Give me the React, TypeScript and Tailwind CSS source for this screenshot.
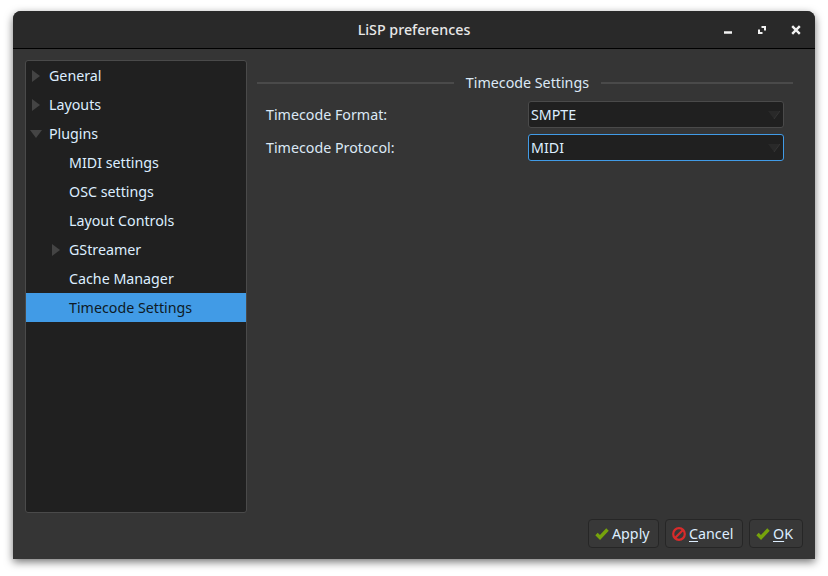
import { ReactNode } from "react";

const FONT = "font-['Noto_Sans',sans-serif]";

const TREE = [
  { label: "General", depth: 0, arrow: "right" },
  { label: "Layouts", depth: 0, arrow: "right" },
  { label: "Plugins", depth: 0, arrow: "down" },
  { label: "MIDI settings", depth: 1 },
  { label: "OSC settings", depth: 1 },
  { label: "Layout Controls", depth: 1 },
  { label: "GStreamer", depth: 1, arrow: "right" },
  { label: "Cache Manager", depth: 1 },
  { label: "Timecode Settings", depth: 1, selected: true },
];

function TreeRow({ label, depth, arrow, selected }: { label: string; depth: number; arrow?: string; selected?: boolean }) {
  return (
    <div
      className={`flex h-[29px] items-center ${depth ? "pl-[43px]" : "pl-[23px]"} ${
        selected ? "bg-[#419be6] text-[#0e1a25]" : "text-[#ddeeff]"
      }`}
    >
      {arrow === "right" && (
        <svg viewBox="0 0 8 12" className="-ml-[17px] mr-[9px] h-3 w-2 shrink-0">
          <path d="M0 0L8 6L0 12Z" fill="#444444" />
        </svg>
      )}
      {arrow === "down" && (
        <svg viewBox="0 0 12 8" className="-ml-[19px] mr-[7px] h-2 w-3 shrink-0">
          <path d="M0 0H12L6 8Z" fill="#444444" />
        </svg>
      )}
      <span>{label}</span>
    </div>
  );
}

function Combo({ value, focused }: { value: string; focused?: boolean }) {
  return (
    <div
      className={`flex h-[27px] w-[256px] items-center justify-between rounded-[3px] border bg-[#202020] pl-[2px] pr-[3px] text-[#ddeeff] ${
        focused ? "border-[#419be6]" : "border-[#4a4a4a]"
      }`}
    >
      <span>{value}</span>
      <svg viewBox="0 0 12 8" className="h-2 w-3">
        <path d="M0 0H12L6 8Z" fill="#292929" />
        <path d="M12 0L6 8" stroke="#363636" strokeWidth="1" />
      </svg>
    </div>
  );
}

function FormRow({ label, children }: { label: string; children: ReactNode }) {
  return (
    <div className="flex items-center justify-between pl-[9px] pr-[19px] text-[#dce9f5]">
      <span>{label}</span>
      {children}
    </div>
  );
}

function DialogButton({ width, icon, children }: { width: string; icon: ReactNode; children: ReactNode }) {
  return (
    <button className={`flex h-[29px] items-center gap-[3px] rounded-[4px] border border-[#262626] bg-[#383838] pl-[6px] text-[#ddeeff] ${width}`}>
      {icon}
      <span>{children}</span>
    </button>
  );
}

const checkIcon = (
  <svg viewBox="0 0 14 14" className="h-[14px] w-[14px] shrink-0">
    <path d="M1.5 7L5 10.5L12.5 2.5" fill="none" stroke="#76a30c" strokeWidth="3.4" />
  </svg>
);

const cancelIcon = (
  <svg viewBox="0 0 14 14" className="h-[14px] w-[14px] shrink-0">
    <circle cx="7" cy="7" r="5.8" fill="none" stroke="#d92b2b" strokeWidth="2.2" />
    <path d="M11 3L3 11" stroke="#d92b2b" strokeWidth="2.2" />
  </svg>
);

export default function App() {
  return (
    <div className={`h-[576px] w-[828px] overflow-hidden bg-white pl-[13px] pt-[11px] text-[14.25px] ${FONT}`}>
      <div className="flex h-[548px] w-[802px] flex-col rounded-t-[8px] bg-[#353535] shadow-[0_3px_9px_rgba(0,0,0,0.55)]">
        {/* Title bar */}
        <div className="grid h-[38px] shrink-0 grid-cols-[1fr_auto_1fr] items-center rounded-t-[8px] border-b border-black bg-[#292929]">
          <div />
          <div className="font-medium text-[#e8e8e8]">LiSP preferences</div>
          <div className="flex items-center justify-end">
            <svg viewBox="0 0 10 10" className="h-[10px] w-[10px]">
              <path d="M1 7.5H9" stroke="#f2f2f2" strokeWidth="2.5" />
            </svg>
            <svg viewBox="0 0 10 10" className="ml-[24px] h-[10px] w-[10px]">
              <path d="M4.5 1H9V5.5H7V3H4.5ZM1 4.5H3V7H5.5V9H1Z" fill="#f2f2f2" />
            </svg>
            <svg viewBox="0 0 10 10" className="ml-[24px] mr-[14px] h-[10px] w-[10px]">
              <path d="M1.2 1.2L8.8 8.8M8.8 1.2L1.2 8.8" stroke="#f2f2f2" strokeWidth="2.4" />
            </svg>
          </div>
        </div>

        <div className="flex min-h-0 flex-1 flex-col px-[12px] pb-[11px] pt-[11px]">
          <div className="flex min-h-0 flex-1 gap-[10px]">
            {/* Sidebar */}
            <div className="h-[453px] w-[222px] shrink-0 rounded-[3px] border border-[#4a4a4a] bg-[#202020]">
              {TREE.map((row) => (
                <TreeRow key={row.label} {...row} />
              ))}
            </div>

            {/* Settings panel */}
            <div className="flex-1 pt-[12px]">
              <div className="flex h-[22px] items-center pr-[10px] text-[#dce9f5]">
                <div className="h-[2px] flex-1 bg-[#4a4a4a]" />
                <span className="px-[12px] pb-[1px]">Timecode Settings</span>
                <div className="h-[2px] w-[192px] bg-[#4a4a4a]" />
              </div>
              <div className="mt-[7px] flex flex-col gap-[6px]">
                <FormRow label="Timecode Format:">
                  <Combo value="SMPTE" />
                </FormRow>
                <FormRow label="Timecode Protocol:">
                  <Combo value="MIDI" focused />
                </FormRow>
              </div>
            </div>
          </div>

          {/* Dialog buttons */}
          <div className="flex justify-end gap-[6px]">
            <DialogButton width="w-[71px]" icon={checkIcon}>Apply</DialogButton>
            <DialogButton width="w-[78px]" icon={cancelIcon}>
              <span className="underline underline-offset-2">C</span>ancel
            </DialogButton>
            <DialogButton width="w-[54px]" icon={checkIcon}>
              <span className="underline underline-offset-2">O</span>K
            </DialogButton>
          </div>
        </div>
      </div>
    </div>
  );
}
